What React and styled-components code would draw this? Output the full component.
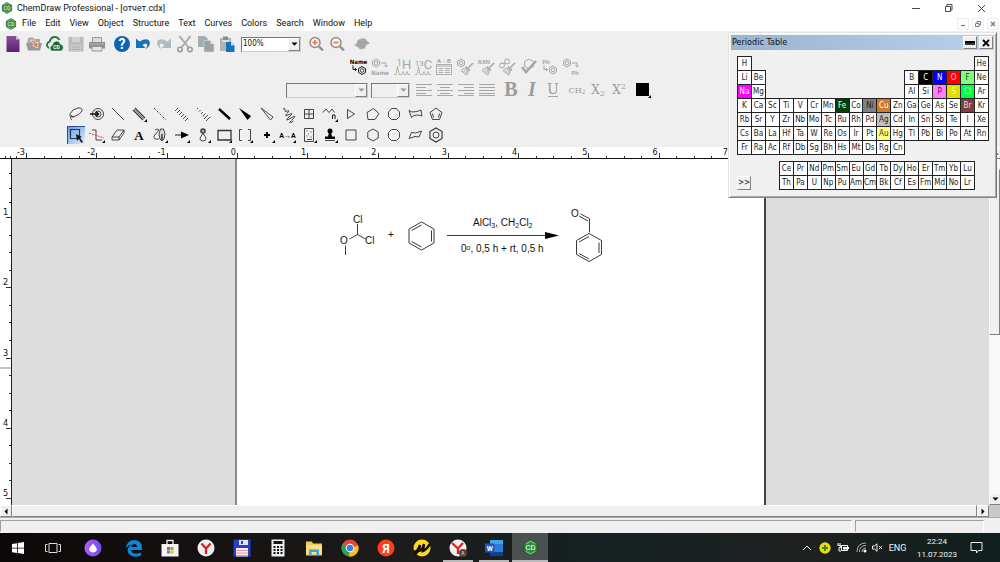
import React, { useState } from 'react';
import styled, { createGlobalStyle, css } from 'styled-components';

const GlobalStyle = createGlobalStyle`
  * {
    box-sizing: border-box;
  }

  body {
    margin: 0;
    background: #fff;
    font-family: Roboto, 'Open Sans', sans-serif;
    font-size: 9px;
    color: #111;
  }

  button {
    margin: 0;
    padding: 0;
    border: 0;
    background: none;
    font: inherit;
    color: inherit;
  }
`;

const tahoma = "'DejaVu Sans Condensed', 'DejaVu Sans', sans-serif";

const raised = css`
  background: #f0f0f0;
  border: 1px solid;
  border-color: #fdfdfd #808080 #808080 #fdfdfd;
`;

const AppWindow = styled.div`
  display: flex;
  flex-direction: column;
  height: 100vh;
  overflow: hidden;
  position: relative;
`;

// TITLE AND MENU
const TitleBar = styled.header`
  display: flex;
  align-items: center;
  flex: none;
  height: 16px;
  padding: 0 2px 0 1px;
`;

const Title = styled.h1`
  flex: 1;
  margin: 0 0 0 4px;
  font-size: 9px;
  line-height: 16px;
  font-weight: normal;
`;

const WindowButton = styled.button`
  display: flex;
  align-items: center;
  justify-content: center;
  width: 33px;
  height: 16px;
`;

const MenuBar = styled.nav`
  display: flex;
  align-items: center;
  flex: none;
  height: 15px;
  padding: 0 1px 0 5px;
`;

const MenuItem = styled.button`
  padding: 0 4px 0 5px;
  line-height: 15px;
`;

const MdiButtons = styled.div`
  display: flex;
  gap: 3px;
  margin-left: auto;
`;

const MdiButton = styled.button`
  display: flex;
  align-items: center;
  justify-content: center;
  width: 12px;
  height: 12px;
  border: 1px solid #eee;
`;

// TOOLBARS
const Toolbars = styled.div`
  flex: none;
  padding-bottom: 2px;
  background: #efefef;
`;

const ToolRow = styled.div`
  display: flex;
  align-items: center;
  height: ${(props) => props.$height}px;
  padding-left: ${(props) => props.$left}px;
  gap: ${(props) => props.$gap || 3}px;
`;

const ToolGroup = styled.div`
  display: flex;
`;

const ToolButton = styled.button`
  display: flex;
  align-items: center;
  justify-content: center;
  width: 21px;
  height: 20px;
`;

const Palette = styled.div`
  display: grid;
  grid-template-columns: repeat(18, 1fr);
  grid-auto-rows: 21px;
  width: 382px;
  margin-left: 65px;
  justify-items: center;
  align-items: center;
`;

const PaletteButton = styled.button`
  display: flex;
  align-items: center;
  justify-content: center;
  width: 18px;
  height: 18px;

  ${(props) =>
    props.$active &&
    css`
      background: linear-gradient(135deg, #5f97d8, #e4f0fb);
      box-shadow: inset 1px 1px 0 #2b4a9c;
    `}
`;

const SelectBox = styled.div`
  display: flex;
  width: ${(props) => props.$width}px;
  height: 15px;
  border: 1px solid;
  border-color: #777 #ccc #ccc #777;
  background: ${(props) => (props.$disabled ? '#efefef' : '#fff')};

  select {
    appearance: none;
    flex: 1;
    min-width: 0;
    padding: 0 1px;
    border: 0;
    border-radius: 0;
    background: none;
    font-family: ${tahoma};
    font-size: 8px;
    line-height: 12px;
    color: #111;
  }
`;

const SelectArrow = styled.span`
  ${raised}
  display: flex;
  align-items: center;
  justify-content: center;
  width: 12px;
  pointer-events: none;
`;

// DOCUMENT
const Workspace = styled.main`
  display: flex;
  flex: 1;
  min-height: 0;
`;

const DocumentColumn = styled.div`
  display: flex;
  flex-direction: column;
  flex: 1;
  min-width: 0;
`;

const HorizontalRuler = styled.div`
  display: grid;
  grid-template-columns: 27px 703px;
  flex: none;
  height: 12px;
  overflow: hidden;
  border-bottom: 1px solid #111;
  font-family: ${tahoma};
  font-size: 9px;
  line-height: 10px;
`;

const RulerRun = styled.div`
  display: grid;
  grid-template-columns: repeat(${(props) => props.$count}, 1fr);
`;

const RulerInch = styled.div`
  display: grid;
  grid-template-columns: repeat(4, 1fr);
  align-items: end;
  text-align: right;

  span {
    height: 2px;
    border-right: 1px solid #333;
  }

  span:last-child {
    height: 11px;
    padding-right: 1px;
    display: flex;
    justify-content: flex-end;
    border-image: linear-gradient(transparent 6px, #333 6px) 1;
  }
`;

const VerticalRuler = styled.div`
  flex: none;
  display: grid;
  grid-template-rows: 59px 281px;
  position: relative;
  width: 12px;
  overflow: hidden;
  border-right: 1px solid #222;
  background: #fff;
  font-family: ${tahoma};
  font-size: 9px;
  line-height: 10px;
`;

const PointerMark = styled.div`
  position: absolute;
  top: 208px;
  left: 0;
  right: 0;
  height: 2px;
  background: #c4c4c4;
`;

const VerticalRun = styled.div`
  display: grid;
  grid-template-rows: repeat(${(props) => props.$count}, 1fr);
`;

const VerticalInch = styled.div`
  display: grid;
  grid-template-rows: repeat(4, 1fr);
  justify-items: end;

  span {
    width: 2px;
    border-bottom: 1px solid #333;
  }

  span:last-child {
    width: 9px;
    display: flex;
    align-items: flex-end;
    padding-left: 1px;
    border-image: linear-gradient(to right, transparent 4px, #333 4px) 1;
  }
`;

const CanvasRow = styled.div`
  display: flex;
  flex: 1;
  min-height: 0;
`;

const Canvas = styled.div`
  display: flex;
  flex: 1;
  min-width: 0;
  padding-left: 223px;
  background: #ddd;
`;

const Page = styled.div`
  flex: none;
  width: 531px;
  padding: 41px 0 0 93px;
  background: #fff;
  border-left: 2px solid #8a8a8a;
  border-right: 2px solid #444;

  svg {
    display: block;
  }
`;

const VerticalScroll = styled.div`
  display: flex;
  flex-direction: column;
  flex: none;
  width: 11px;
  background: #f8f8f8;
`;

const ScrollButton = styled.button`
  ${raised}
  display: flex;
  align-items: center;
  justify-content: center;
  flex: none;
  width: 12px;
  height: 12px;
`;

const ScrollThumb = styled.div`
  ${raised}
  height: ${(props) => props.$height || 12}px;
  flex: ${(props) => (props.$height ? 'none' : 1)};
  margin: ${(props) => (props.$height ? '10px 0 auto' : '0')};
`;

const ScrollCorner = styled.div`
  height: 12px;
  background: #c8c8c8;
`;

const HorizontalScroll = styled.div`
  display: flex;
  flex: none;
  height: 12px;
`;

const StatusBar = styled.footer`
  display: flex;
  gap: 3px;
  flex: none;
  height: 16px;
  padding: 2px 16px 1px 0;
  background: #efefef;
  border-top: 1px solid #aaa;
`;

const StatusCell = styled.div`
  flex: ${(props) => (props.$width ? 'none' : 1)};
  width: ${(props) => props.$width}px;
  border: 1px solid;
  border-color: #a0a0a0 #fff #efefef #a0a0a0;
`;

// PERIODIC TABLE
const FloatingPanel = styled.section`
  position: absolute;
  top: 32px;
  right: 3px;
  width: 269px;
  padding: 2px 2px 7px;
  background: #f0f0f0;
  border: 1px solid;
  border-color: #e3e3e3 #777 #888 #e3e3e3;
  box-shadow: inset 1px 1px 0 #fff, inset -1px -1px 0 #aaa;
  font-family: ${tahoma};
`;

const PanelTitle = styled.div`
  display: flex;
  align-items: center;
  gap: 2px;
  height: 15px;
  padding: 0 1px;
  background: linear-gradient(to right, #99b4d1, #b9d1ea);

  h2 {
    flex: 1;
    margin: 0;
    font-size: 9px;
    line-height: 15px;
    font-weight: normal;
  }
`;

const PanelButton = styled.button`
  ${raised}
  display: flex;
  align-items: center;
  justify-content: center;
  width: 14px;
  height: 13px;
`;

const ElementTable = styled.table`
  width: ${(props) => props.$width}px;
  margin-left: 6px;
  margin-top: 6px;
  table-layout: fixed;
  border-collapse: collapse;

  td {
    height: 14px;
    padding: 0;
    font-size: 8px;
    line-height: 12px;
    text-align: center;
  }
`;

const Element = styled.td`
  border: 1px solid #222;
  background: ${(props) => props.$bg || '#fff'};
  color: ${(props) => props.$color || '#222'};
`;

const PanelFooter = styled.div`
  display: flex;
  align-items: flex-end;
  padding-left: 6px;

  table {
    margin-left: 28px;
  }
`;

const MoreButton = styled.button`
  ${raised}
  width: 14px;
  height: 14px;
  font-size: 8px;
  line-height: 12px;
`;

// TASKBAR
const Taskbar = styled.div`
  display: flex;
  flex: none;
  height: 29px;
  background: linear-gradient(to right, #0c0807, #1d1c1b 40%, #152122 60%, #1f2020 80%, #0f1f1d);
  color: #f2f2f2;
`;

const TaskButton = styled.button`
  display: flex;
  align-items: center;
  justify-content: center;
  width: ${(props) => props.$width || 36}px;
  background: ${(props) => (props.$active ? '#4b5050' : 'none')};
  ${(props) =>
    props.$running &&
    css`
      background-image: linear-gradient(#b9b9b9, #b9b9b9);
      background-repeat: no-repeat;
      background-position: bottom;
      background-size: ${props.$active ? '36px' : '30px'} 2px;
    `}
`;

const Tray = styled.div`
  display: flex;
  align-items: center;
  margin-left: auto;
  padding-right: 3px;
`;

const TrayButton = styled.button`
  display: flex;
  align-items: center;
  justify-content: center;
  width: ${(props) => props.$width || 18}px;
  height: 29px;
`;

const Clock = styled.time`
  width: 52px;
  text-align: center;
  font-size: 8px;
  line-height: 13px;
`;

const Drawing = ({ w = 18, h = 18, children }) => (
  <svg width={w} height={h} viewBox={`0 0 ${w} ${h}`} aria-hidden="true">
    {children}
  </svg>
);

const Corner = () => <path d="M17 14V17h-3z" fill="#000" />;

const ArrowDown = ({ color = '#000' }) => (
  <Drawing w={7} h={4}>
    <path d="M0.5 0.5h6L3.5 3.7z" fill={color} />
  </Drawing>
);

const CdLogo = ({ size = 14 }) => (
  <svg width={size} height={size} viewBox="0 0 18 18" aria-hidden="true">
    <path d="M9 .8l7 4.1v8.2L9 17.2l-7-4.1V4.900z" fill="#2f8b3d" stroke="#176129" />
    <path d="M4 5l5-2.800L14 5M14 13l-5 2.800L4 13" fill="none" stroke="#b9dfb8" strokeWidth=".8" />
    <text x="9" y="12" fontSize="8" fontFamily="Roboto" textAnchor="middle" fill="#fff">CD</text>
  </svg>
);

const g = '#a6a6a6';
const line = { fill: 'none', stroke: '#333', strokeWidth: 0.9 };
const grey = { fill: 'none', stroke: g, strokeWidth: 1 };

const Broom = () => (
  <g>
    <path d="M17 5l-4.500 4.500" stroke={g} strokeWidth="1.600" />
    <path d="M10.500 8l4 4-1.500 1.200-3.800-3.800z" fill={g} />
    <path d="M8.500 10l3.800 3.800-1.800 3.200-5.500-4.500z" fill="none" stroke={g} />
    <path d="M9.500 11.500l-2 2.500M11 13l-1.500 2.500" stroke={g} />
  </g>
);

const Magnifier = ({ plus }) => (
  <Drawing>
    <circle cx="8" cy="7.500" r="5" fill="#f6f0ee" stroke="#8f8f8f" strokeWidth="1.500" />
    <path d="M12 11.500l4 4" stroke="#8f8f8f" strokeWidth="2.400" />
    <path d={plus ? 'M5.500 7.500h5M8 5v5' : 'M5.500 7.500h5'} stroke="#f0743a" strokeWidth="1.600" />
  </Drawing>
);

const fileTools = [
  ['New', <Drawing>
    <defs><linearGradient id="doc" x2="0" y2="1"><stop stopColor="#8c4f9c" /><stop offset="1" stopColor="#55246f" /></linearGradient></defs>
    <path d="M2.500 1h9.500l3.500 3.500V17h-13z" fill="url(#doc)" /><path d="M12 1l3.500 3.500H12z" fill="#d8c2e0" />
  </Drawing>],
  ['Open', <Drawing>
    <path d="M2.500 4.500L4 2.500h4l1.500 1.500H15v4H2.500z" fill="#a9a9a9" /><path d="M1 8h16l-2 7.500H3z" fill="#999" />
    <path d="M5 5.500q4.500-1.500 6 2.500l2-1-.5 6-5-2.500 1.700-1Q8 6.500 5 5.500z" fill="#f07a35" stroke="#fff" strokeWidth=".6" />
  </Drawing>],
  ['Open from cloud', <Drawing>
    <path d="M3 13q-2.500-1-1.800-4 .5-2 2.500-2.500Q5 1.500 9.500 2q3 .5 4 3" fill="none" stroke="#2a7a40" strokeWidth="2" />
    <path d="M6 16q-2.500-1-1.800-3.500.5-1.800 2-2.300Q7 6.500 10.500 6q3 0 4 3.300 2.800.5 2.800 3.200 0 3-2.500 3.500z" fill="#1c6b35" stroke="#efefef" strokeWidth=".6" />
    <text x="10.500" y="14" fontSize="5" fontWeight="bold" textAnchor="middle" fill="#fff">CD</text>
  </Drawing>],
  ['Save', <Drawing>
    <path d="M1.500 2h15v14.500h-15z" fill="#bbb" /><path d="M5 2h8v5H5z" fill="#d2d2d2" /><path d="M4 9.500h10v7H4z" fill="#c9c9c9" />
    <path d="M5 12h8M5 14.500h8" stroke="#b2b2b2" />
  </Drawing>],
  ['Print', <Drawing>
    <path d="M4.500 2.500h9v5h-9z" fill="#ddd" stroke="#999" /><path d="M1 7h16v6.500H1z" fill="#8e8e8e" />
    <path d="M4 11.500h10v4.500H4z" fill="#e4e4e4" stroke="#999" /><path d="M2 9h14" stroke="#bbb" />
  </Drawing>],
];

const editTools = [
  ['Help', <Drawing>
    <circle cx="9" cy="9" r="8" fill="#0a66ad" />
    <text x="9" y="14" fontSize="14" fontWeight="bold" textAnchor="middle" fill="#fff">?</text>
  </Drawing>],
  ['Undo', <Drawing>
    <path d="M2 3.500V13h9.500l-3-3q3-2.500 4.500-1 1 2.500-2 5.500 6-3 4.500-8.500Q13 2.500 5.500 6.500z" fill="#1572b5" />
  </Drawing>],
  ['Redo', <Drawing>
    <path d="M16 3.500V13H6.500l3-3Q6.500 7.500 5 9q-1 2.500 2 5.500Q1 11.500 2.500 6 5 2.500 12.500 6.500z" fill="#b0bac1" />
  </Drawing>],
  ['Cut', <Drawing>
    <path d="M3.500 1l9 11.500M14.500 1L5.500 12.500" stroke="#a6a6a6" strokeWidth="1.800" />
    <circle cx="4" cy="14.500" r="2.200" fill="none" stroke="#9b9b9b" strokeWidth="1.600" /><circle cx="14" cy="14.500" r="2.200" fill="none" stroke="#9b9b9b" strokeWidth="1.600" />
  </Drawing>],
  ['Copy', <Drawing>
    <path d="M1 1h7l2.500 2.500V12H1z" fill="#a4adb2" /><path d="M7 5.500h6.500L17 9v8H7z" fill="#97a2a9" stroke="#dcdcdc" strokeWidth=".6" />
    <path d="M13.500 5.500V9H17z" fill="#dfe4e6" />
  </Drawing>],
  ['Paste', <Drawing>
    <path d="M2 3h11v13H2z" fill="#b4b4b4" /><path d="M5 1.500h5V5H5z" fill="#8c8c8c" /><path d="M4 5h7v2H4z" fill="#dedede" />
    <path d="M8 7h5l3.500 3.500V17H8z" fill="#1274bb" /><path d="M13 7v3.500h3.500z" fill="#bfe0f5" />
  </Drawing>],
];

const hexSmall = (x, y, r = 4) => `M${x} ${y - r}l${r * 0.87} ${r / 2}v${r}l${-r * 0.87} ${r / 2}l${-r * 0.87} ${-r / 2}v${-r}z`;

const structureTools = [
  [
    ['Name to structure', <Drawing>
      <text x="8.500" y="5.500" fontSize="6" fontWeight="bold" fontFamily="DejaVu Sans Condensed" textAnchor="middle" fill="#000">Name</text>
      <path d="M3 7.500v4h3M5 10l1.600 1.500L5 13" {...line} stroke="#000" /><path d={hexSmall(12, 12.500)} {...line} stroke="#000" /><circle cx="12" cy="12.500" r="1.800" {...line} />
    </Drawing>],
    ['Structure to name', <Drawing>
      <path d={hexSmall(5, 5)} {...grey} /><circle cx="5" cy="5" r="1.800" {...grey} />
      <path d="M10 5h5v4M13.500 7.500L15 9l1.500-1.500" {...grey} />
      <text x="9" y="16.500" fontSize="6" fontWeight="bold" fontFamily="DejaVu Sans Condensed" textAnchor="middle" fill={g}>Name</text>
    </Drawing>],
  ],
  [
    ['Proton shifts', <Drawing>
      <text x="11" y="11" fontSize="13" textAnchor="middle" fill={g}><tspan fontSize="9" dy="-3">1</tspan><tspan dy="3">H</tspan></text>
      <path d="M1 16.500h2l1.500-8 1.500 8h3l1-3 1 3h2l1-3 1 3h2" {...grey} strokeWidth=".8" />
    </Drawing>],
    ['Carbon shifts', <Drawing>
      <text x="9.500" y="11" fontSize="13" textAnchor="middle" fill={g}><tspan fontSize="8" dy="-3">13</tspan><tspan dy="3">C</tspan></text>
      <path d="M1 16.500h2l1.500-8 1.500 8h3l1-3 1 3h2l1-3 1 3h2" {...grey} strokeWidth=".8" />
    </Drawing>],
    ['Analyze reaction', <Drawing>
      <text x="9" y="5" fontSize="6" fontWeight="bold" textAnchor="middle" fill={g}>A→B</text>
      <path d="M1.500 6.500h15v10h-15zM1.500 8h15M3.500 10.500h5M10 10.500h5M3.500 12.500h5M10 12.500h5M3.500 14.500h5M10 14.500h5" {...grey} strokeWidth=".9" />
    </Drawing>],
    ['Clean structure', <Drawing><path d={hexSmall(5, 5)} {...grey} /><circle cx="5" cy="5" r="1.800" {...grey} /><Broom /></Drawing>],
    ['Clean reaction', <Drawing><text x="7" y="5.500" fontSize="6" fontWeight="bold" textAnchor="middle" fill={g}>RXN</text><Broom /></Drawing>],
    ['Clean biopolymer', <Drawing>
      <circle cx="4" cy="7.500" r="2.500" {...grey} /><circle cx="9" cy="3.500" r="2.500" {...grey} /><path d="M4 5q2 1 3 0" {...grey} /><Broom />
    </Drawing>],
  ],
  [
    ['Check structure', <Drawing>
      <path d={hexSmall(9, 6, 5)} {...grey} /><path d="M2 9l4 5L16 3" fill="none" stroke={g} strokeWidth="2.500" />
    </Drawing>],
    ['Expand label', <Drawing>
      <text x="5" y="5.500" fontSize="6" fontWeight="bold" textAnchor="middle" fill={g}>Ph</text>
      <path d="M3 7.500v4h3M5 10l1.600 1.500L5 13" {...grey} /><path d={hexSmall(12, 12, 4)} {...grey} /><circle cx="12" cy="12" r="1.800" {...grey} />
    </Drawing>],
    ['Contract label', <Drawing>
      <path d={hexSmall(5, 5)} {...grey} /><circle cx="5" cy="5" r="1.800" {...grey} /><path d="M10 5h5v4M13.500 7.500L15 9l1.500-1.500" {...grey} />
      <text x="13" y="16.500" fontSize="6" fontWeight="bold" textAnchor="middle" fill={g}>Ph</text>
    </Drawing>],
  ],
];

const alignRows = [
  ['Align left', 'M1 3.500h16M1 6.500h10M1 9.500h16M1 12.500h10M1 14.500h16'],
  ['Center', 'M1 3.500h16M4 6.500h10M1 9.500h16M4 12.500h10M1 14.500h16'],
  ['Align right', 'M1 3.500h16M7 6.500h10M1 9.500h16M7 12.500h10M1 14.500h16'],
  ['Justify', 'M1 3.500h16M1 6.500h16M1 9.500h16M1 12.500h16M1 14.500h16'],
];

const Serif = ({ size, children, ...rest }) => (
  <text x="10" y="15" fontSize={size} fontFamily="DejaVu Serif" textAnchor="middle" fill="#9c9c9c" {...rest}>
    {children}
  </text>
);

const styleTools = [
  ['Bold', <Serif size="20" fontFamily="Liberation Serif" fontWeight="bold">B</Serif>],
  ['Italic', <Serif size="20" fontFamily="Liberation Serif" fontWeight="bold" fontStyle="italic">I</Serif>],
  ['Underline', <><Serif size="14" y="13">U</Serif><path d="M5 15.500h10" {...grey} /></>],
];

const scriptTools = [
  ['Formula', <Serif size="8" y="12">CH<tspan fontSize="6" dy="1">2</tspan></Serif>],
  ['Subscript', <Serif size="12" y="13">X<tspan fontSize="8" dy="2">2</tspan></Serif>],
  ['Superscript', <Serif size="12" y="13">X<tspan fontSize="8" dy="-5">2</tspan></Serif>],
];

const drawingTools = [
  ['Lasso', <><path d="M7 12Q2 12 3 9q2-5 8-6 5-.5 4 3-2 4-8 5.500Q4 12 4 10M4 11.500q-1.500 2 1 3.500" {...line} /></>],
  ['Structure perspective', <><circle cx="10" cy="9" r="5.500" {...line} /><circle cx="10" cy="9" r="3" {...line} /><path d="M2 9h8M8 6.500L10.500 9 8 11.500" {...line} stroke="#111" strokeWidth="1.500" /></>],
  ['Solid bond', <path d="M3 3l12 12" {...line} />],
  ['Multiple bonds', <><path d="M3 5l10 10M5 3l10 10" {...line} strokeWidth="1.100" /><path d="M4 4l10 10" {...line} strokeWidth=".6" /><Corner /></>],
  ['Dashed bond', <path d="M3 3l12 12" {...line} strokeDasharray="2.500 1.500" />],
  ['Hashed bond', <path d="M2 6l3-3M4 8l3-3M6 10l3-3M8 12l3-3M10 14l3-3M12 16l3-3" {...line} />],
  ['Hashed wedged bond', <path d="M3 4l1-1M5 6.500l1.500-1.500M7 9l2-2M8.500 11.500l3-3M10 14l4-4M12 16l4-4" {...line} />],
  ['Bold bond', <path d="M4 4l11 10" {...line} stroke="#000" strokeWidth="2.400" />],
  ['Wedged bond', <path d="M3 3l12 8-3.500 4z" fill="#000" />],
  ['Hollow wedged bond', <path d="M3 3l12 9-2.500 3z" {...line} />],
  ['Wavy bond', <path d="M4 4q2.500-1.500 2 1t2.500 1-.5 2.500 2 1 0 2.500 2 1 .500 2.500 2 .5" {...line} />],
  ['Table', <path d="M4.500 4.500h9v9h-9zM9 4.500v9M4.500 9h9" {...line} />],
  ['Acyclic chain', <><path d="M2 7.500l3-3.500 3 3.500L11 4l2.500 3.500" {...line} /><path d="M11.500 14v-4h2.500v4" {...line} stroke="#000" /><Corner /></>],
  ['Cyclopropane', <path d="M5.500 4.500l7 4.500-7 4.500z" {...line} />],
  ['Cyclopentane', <path d="M9.500 3.500l5.500 5L11 14.500H4l-1-7z" {...line} />],
  ['Cycloheptane', <path d="M6.500 3.500h5L14.500 7v4.500L11.500 14.500h-5L3.500 11.500V7z" {...line} />],
  ['Chair cyclohexane', <path d="M3 5.500l3 1.500 5-.5 4-1.500 1 6-4-1-4 .5-2.500 2z" {...line} />],
  ['Cyclopentadiene', <path d="M9 3l6 4.500-2.500 7h-7L3 7.500zM6.500 12.500L5.500 8.500M11.500 12.500l1-4" {...line} />],
  ['Marquee', <><path d="M3.500 3.500h9v9h-9z" {...line} stroke="#173a5e" strokeWidth="1.200" /><path d="M9 8l6 3-2 1 3 4-1.500 1-2.500-4-2 2z" fill="#111" /></>],
  ['Structure fragment', <><path d="M4 4h4v10h6" {...line} /><path d="M1 7l15 5" fill="none" stroke="#f33" strokeDasharray="2 1" /><Corner /></>],
  ['Eraser', <path d="M3 11l5-7h7l-5 7zM3 11v3h7v-3M10 14l5-7V4" {...line} />],
  ['Text', <text x="9" y="13.500" fontSize="13" fontFamily="Liberation Serif" fontWeight="bold" textAnchor="middle">A</text>],
  ['Pen', <><path d="M8 13Q2 14 3 10l5-6M4 4q2-2 4 0" {...line} /><path d="M9.500 3h3l1.500 5-1 5-2 2-2-2-1-5z" {...line} fill="#ddd" /><path d="M11 8v6" {...line} strokeWidth="1.500" /><Corner /></>],
  ['Arrow', <><path d="M2 9h9" {...line} stroke="#000" /><path d="M8 5.500L16 9l-8 3.500z" fill="#000" /><Corner /></>],
  ['Orbital', <><circle cx="9" cy="5" r="2.800" fill="#444" /><circle cx="9" cy="5" r="1" fill="#ddd" /><path d="M9 7.500q-6 7 0 7.500 6-.5 0-7.500z" {...line} /><Corner /></>],
  ['Drawing elements', <><path d="M3 4.500h13v9.500H3z" {...line} strokeWidth="1.300" /><Corner /></>],
  ['Brackets', <><path d="M6 3.500H3.500v11H6M12 3.500h2.500v11H12" {...line} /><Corner /></>],
  ['Chemical symbol', <><path d="M9 6v6M6 9h6" stroke="#000" strokeWidth="1.800" /><Corner /></>],
  ['Atom map', <><text x="8.500" y="12" fontSize="7" fontWeight="bold" textAnchor="middle">A→A</text><Corner /></>],
  ['TLC plate', <><path d="M4.500 2.500h9v13h-9z" {...line} /><path d="M6.500 5h1M10.500 6h1M8 8h1M6.500 10h1M10.500 11h1M7 13.500h5" {...line} /><Corner /></>],
  ['Template', <><circle cx="9" cy="5" r="2.500" /><path d="M8 6h2l1 4.500h3V13H4v-2.500h3z" /><path d="M4 14.500h10" {...line} /><Corner /></>],
  ['Cyclobutane', <path d="M4 4h10v10H4z" {...line} />],
  ['Cyclohexane', <path d={hexSmall(9, 9, 6)} {...line} />],
  ['Cyclooctane', <path d="M6.500 3.500h5L14.500 6.500v5L11.500 14.500h-5L3.500 11.500v-5z" {...line} />],
  ['Chair cyclohexane 2', <path d="M3 12.500l2.500-6 4 .5 6-2-2.500 6-4-.5z" {...line} />],
  ['Benzene', <><path d={hexSmall(9, 9, 7)} {...line} strokeWidth="1.100" /><circle cx="9" cy="9" r="3" {...line} /></>],
];

const elementColors = {
  Na: ['#ff00ff', '#fff'], C: ['#000', '#fff'], N: ['#0000ff', '#fff'], O: ['#ff0000', '#ffd0d0'],
  F: ['#80ff80', '#174d17'], P: ['#ff80ff', '#4d174d'], S: ['#e0e000', '#fffbb0'], Cl: ['#00ff40', '#d8ffe0'],
  Fe: ['#004000', '#fff'], Ni: ['#808080', '#222'], Cu: ['#d07a30', '#fff'], Br: ['#803f3f', '#ecd8d8'],
  Ag: ['#c0c0c0', '#222'], Au: ['#ffff80', '#333'],
};

const mainElements = [
  'H ---------------- He',
  'Li Be ---------- B C N O F Ne',
  'Na Mg ---------- Al Si P S Cl Ar',
  'K Ca Sc Ti V Cr Mn Fe Co Ni Cu Zn Ga Ge As Se Br Kr',
  'Rb Sr Y Zr Nb Mo Tc Ru Rh Pd Ag Cd In Sn Sb Te I Xe',
  'Cs Ba La Hf Ta W Re Os Ir Pt Au Hg Tl Pb Bi Po At Rn',
  'Fr Ra Ac Rf Db Sg Bh Hs Mt Ds Rg Cn ------',
];

const innerElements = [
  'Ce Pr Nd Pm Sm Eu Gd Tb Dy Ho Er Tm Yb Lu',
  'Th Pa U Np Pu Am Cm Bk Cf Es Fm Md No Lr',
];

const Elements = ({ rows, width, count }) => (
  <ElementTable $width={width}>
    <colgroup>
      {Array.from({ length: count }, (_, i) => <col key={i} />)}
    </colgroup>
    <tbody>
      {rows.map((row) => (
        <tr key={row}>
          {row.split(' ').map((symbol) =>
            symbol[0] === '-' ? (
              <td key={symbol} colSpan={symbol.length} />
            ) : (
              <Element key={symbol} $bg={elementColors[symbol]?.[0]} $color={elementColors[symbol]?.[1]}>
                {symbol}
              </Element>
            )
          )}
        </tr>
      ))}
    </tbody>
  </ElementTable>
);

const Inch = ({ as: Part, label }) => (
  <Part>
    <span />
    <span />
    <span />
    <span>{label}</span>
  </Part>
);

const Reaction = () => (
  <svg width="290" height="70" viewBox="0 0 290 70" fontFamily="Liberation Sans" fontSize="10" role="img" aria-label="Reaction scheme">
    <g fill="none" stroke="#222" strokeWidth=".9">
      <path d="M27.500 24v10.500l-8 4.500M27.500 34.500l8 4.500M15.500 45.500v9.500" />
      <path d="M91.500 22l12.500 7v14l-12.500 7-12.500-7V29zM91.500 25l-10 5.500M101.500 30.500v11M91.500 47l-10-5.500" />
      <path d="M117 35.500h100" />
      <path d="M249 16l9 5M250.500 13.800l9 5v13.500M259 33.500l12.500 7v14l-12.500 7-12.500-7v-14zM259 36.500l-10 5.500M249 53.500l10 5.500M269 42.500v10.500" />
    </g>
    <path d="M215 32l14 3.500-14 3.500z" />
    <g fill="#111">
      <text x="23" y="23">Cl</text>
      <text x="35" y="44">Cl</text>
      <text x="10" y="44">O</text>
      <text x="58" y="38">+</text>
      <text x="143" y="26">AlCl<tspan fontSize="7" dy="2">3</tspan><tspan dy="-2">, CH</tspan><tspan fontSize="7" dy="2">2</tspan><tspan dy="-2">Cl</tspan><tspan fontSize="7" dy="2">2</tspan></text>
      <text x="131" y="52">0<tspan fontSize="7" dy="-2">o</tspan><tspan dy="2">, 0,5 h + rt, 0,5 h</tspan></text>
      <text x="241" y="17">O</text>
    </g>
  </svg>
);

const taskIcons = [
  ['Edge', <><path d="M1 9Q2 1 9.500 1q7.500.5 7.500 8v2H6q.500 3.500 5 3.500 3 0 5-1v3q-3 1.500-6 1.300Q3 17 2.500 11 3 7 7 5.500 4 5 1 9zM6 8h6q0-3-3-3-2.500.3-3 3z" fill="#0a84dc" /></>],
  ['Store', <><path d="M6 5V1.500h6V5" fill="none" stroke="#eee" strokeWidth="1.300" /><path d="M.5 5h17v12.500H.5z" fill="#f4f4f4" /><path d="M6 8h3v3H6z" fill="#e8502c" /><path d="M9.500 8h3v3h-3z" fill="#7cb82f" /><path d="M6 11.500h3v3H6z" fill="#2a9bdc" /><path d="M9.500 11.500h3v3h-3z" fill="#f5b81c" /></>],
  ['Yandex Browser', <><circle cx="9" cy="9" r="8.500" fill="#eee" /><path d="M4.500 4.500L9 9.500l4.500-5M9 9v6" fill="none" stroke="#d8201c" strokeWidth="2.200" /></>],
  ['Total Commander', <><path d="M.5.5h17v17H.5z" fill="#2440c8" /><path d="M3 9h12v8.500H3z" fill="#fbeaea" /><path d="M3 11.500h12M3 14h12M3 16.500h12" stroke="#ef9a9a" /><path d="M6 1h9v5H6z" fill="#dfe5f5" /><path d="M8 2h2v3H8z" fill="#2440c8" /></>],
  ['Calculator', <><path d="M2.500.5h13v17h-13z" fill="#eee" /><path d="M4.500 2h9v3h-9z" fill="#161616" /><path d="M4.500 8h9M4.500 11h9M4.500 14h9" stroke="#161616" strokeWidth="2" strokeDasharray="2 1.500" /></>],
  ['Explorer', <><path d="M1 2.500h6l1 2h9v12H1z" fill="#f5c851" /><path d="M1 6h16v9H1z" fill="#fbdf87" /><path d="M4 16.500v-6h10v6h-2.500V13h-5v3.500z" fill="#33a7e0" /></>],
  ['Chrome', <><circle cx="9" cy="9" r="8.500" fill="#e8453c" /><path d="M9 9L1.600 4.700A8.500 8.500 0 0 0 8 17.400z" fill="#2f9e4f" /><path d="M9 9l8.200-2.500A8.500 8.500 0 0 1 8 17.400z" fill="#fbc116" /><circle cx="9" cy="9" r="4.300" fill="#fff" /><circle cx="9" cy="9" r="3.300" fill="#3b7de9" /></>],
  ['Yandex', <><circle cx="9" cy="9" r="8.500" fill="#fc3f1d" /><text x="9" y="13.500" fontSize="12" fontWeight="bold" textAnchor="middle" fill="#fff">Я</text></>],
  ['Yandex Music', <><circle cx="9" cy="9" r="8.500" fill="#ffd91a" /><path d="M1 12q3 2 6-6l-1 6q3 0 5-7l-1 7q3-1 7-7M2 15q2-1 3-3" fill="none" stroke="#111" strokeWidth="2.400" /></>],
  ['Yandex Browser A', <><circle cx="9" cy="9" r="8.500" fill="#f1f1f1" /><path d="M3 4l6 5.500L14 4M9 9v6" fill="none" stroke="#d8201c" strokeWidth="2.200" /><circle cx="14" cy="14" r="4" fill="#5b4038" /><text x="14" y="16" fontSize="5" textAnchor="middle" fill="#ddd">A</text></>, true],
  ['Word', <><path d="M5 1h13v16H5z" fill="#2b7cd3" /><path d="M5 1h13v4H5z" fill="#41a5ee" /><path d="M5 13h13v4H5z" fill="#103f91" /><path d="M0 4.500h9.500v9H0z" fill="#185abd" /><text x="4.800" y="11.500" fontSize="7" fontWeight="bold" textAnchor="middle" fill="#fff">W</text></>, true],
];

const Tools = ({ items, disabled }) => (
  <ToolGroup>
    {items.map(([name, icon]) => (
      <ToolButton key={name} aria-label={name} disabled={disabled}>
        {icon}
      </ToolButton>
    ))}
  </ToolGroup>
);

const App = () => {
  const [zoom, setZoom] = useState('100%');
  const [tool, setTool] = useState('Marquee');

  return (
    <AppWindow>
      <GlobalStyle />
      <TitleBar>
        <CdLogo size={12} />
        <Title>ChemDraw Professional - [отчет.cdx]</Title>
        <WindowButton aria-label="Minimize"><Drawing w={9} h={9}><path d="M1 4.500h8" {...line} /></Drawing></WindowButton>
        <WindowButton aria-label="Restore"><Drawing w={9} h={9}><path d="M1.500 2.500h5v5h-5zM3 2V.5h5v5.500H7" {...line} /></Drawing></WindowButton>
        <WindowButton aria-label="Close"><Drawing w={9} h={9}><path d="M1 1l7 7M8 1L1 8" {...line} /></Drawing></WindowButton>
      </TitleBar>
      <MenuBar>
        <CdLogo size={12} />
        {['File', 'Edit', 'View', 'Object', 'Structure', 'Text', 'Curves', 'Colors', 'Search', 'Window', 'Help'].map((item) => (
          <MenuItem key={item}>{item}</MenuItem>
        ))}
        <MdiButtons>
          <MdiButton aria-label="Minimize document"><Drawing w={6} h={6}><path d="M1 4.500h4" stroke="#6f7f90" strokeWidth="1.200" /></Drawing></MdiButton>
          <MdiButton aria-label="Restore document"><Drawing w={6} h={6}><path d="M.5 2.500h3.500v3H.5zM2 2V.5h3.500V4H4" fill="none" stroke="#6f7f90" /></Drawing></MdiButton>
          <MdiButton aria-label="Close document"><Drawing w={6} h={6}><path d="M1 1l4 4M5 1L1 5" stroke="#6f7f90" strokeWidth="1.400" /></Drawing></MdiButton>
        </MdiButtons>
      </MenuBar>

      <Toolbars>
        <ToolRow $height={26} $left={2} $gap={4}>
          <Tools items={fileTools} />
          <Tools items={editTools} />
          <SelectBox $width={60}>
            <select aria-label="Zoom" value={zoom} onChange={(e) => setZoom(e.target.value)}>
              <option>50%</option>
              <option>100%</option>
              <option>200%</option>
            </select>
            <SelectArrow><ArrowDown /></SelectArrow>
          </SelectBox>
          <Tools items={[['Zoom in', <Magnifier plus />], ['Zoom out', <Magnifier />]]} />
          <Tools items={[['Chem3D', <Drawing><path d="M4 6q4-4 9-2l1 2 3 2-4 2.500-1 3-5 1-2-2.500-4-2 3-2z" fill="#aaa" /><path d="M5 8l9-1M4 11l8-1" stroke="#999" /></Drawing>]]} />
        </ToolRow>
        <ToolRow $height={20} $left={348} $gap={1}>
          {structureTools.map((items, i) => <Tools key={i} items={items} />)}
        </ToolRow>
        <ToolRow $height={26} $left={286}>
          <SelectBox $width={82} $disabled>
            <select aria-label="Font" disabled />
            <SelectArrow><ArrowDown color="#999" /></SelectArrow>
          </SelectBox>
          <SelectBox $width={39} $disabled>
            <select aria-label="Font size" disabled />
            <SelectArrow><ArrowDown color="#999" /></SelectArrow>
          </SelectBox>
          <Tools disabled items={alignRows.map(([name, d]) => [name, <Drawing><path d={d} {...grey} /></Drawing>])} />
          <Tools disabled items={styleTools.map(([name, d]) => [name, <Drawing w={20}>{d}</Drawing>])} />
          <Tools disabled items={scriptTools.map(([name, d]) => [name, <Drawing w={20}>{d}</Drawing>])} />
          <Tools items={[['Color', <Drawing><path d="M2 2h13v13H2z" /><Corner /></Drawing>]]} />
        </ToolRow>
        <Palette>
          {drawingTools.map(([name, icon]) => (
            <PaletteButton key={name} aria-label={name} $active={tool === name} onClick={() => setTool(name)}>
              <Drawing>{icon}</Drawing>
            </PaletteButton>
          ))}
        </Palette>
      </Toolbars>

      <Workspace>
        <DocumentColumn>
          <HorizontalRuler>
            <RulerRun $count={1}><Inch as={RulerInch} label="-3" /></RulerRun>
            <RulerRun $count={10}>
              {[-2, -1, 0, 1, 2, 3, 4, 5, 6, 7].map((n) => <Inch key={n} as={RulerInch} label={n} />)}
            </RulerRun>
          </HorizontalRuler>
          <CanvasRow>
            <VerticalRuler>
              <VerticalRun $count={1}><Inch as={VerticalInch} label="1" /></VerticalRun>
              <VerticalRun $count={4}>
                {[2, 3, 4, 5].map((n) => <Inch key={n} as={VerticalInch} label={n} />)}
              </VerticalRun>
              <PointerMark />
            </VerticalRuler>
            <Canvas>
              <Page><Reaction /></Page>
            </Canvas>
          </CanvasRow>
          <HorizontalScroll>
            <ScrollButton aria-label="Scroll left"><Drawing w={4} h={7}><path d="M3.500.5v6L.5 3.500z" /></Drawing></ScrollButton>
            <ScrollThumb />
            <ScrollButton aria-label="Scroll right"><Drawing w={4} h={7}><path d="M.5.5v6l3-3z" /></Drawing></ScrollButton>
          </HorizontalScroll>
        </DocumentColumn>
        <VerticalScroll>
          <ScrollButton aria-label="Scroll up"><Drawing w={7} h={4}><path d="M.5 3.500h6l-3-3z" /></Drawing></ScrollButton>
          <ScrollThumb $height={166} />
          <ScrollButton aria-label="Scroll down"><ArrowDown /></ScrollButton>
          <ScrollCorner />
        </VerticalScroll>
      </Workspace>

      <StatusBar>
        <StatusCell />
        <StatusCell $width={129} />
      </StatusBar>

      <Taskbar>
        <TaskButton $width={35} aria-label="Start">
          <Drawing w={12} h={12}><path d="M0 2l5-.8v4.500H0zM5.800 1L12 0v5.700H5.800zM0 6.500h5v4.500l-5-.8zM5.800 6.500H12V12l-6.200-1z" fill="#fff" /></Drawing>
        </TaskButton>
        <TaskButton $width={35} aria-label="Task view">
          <Drawing w={16} h={12}><path d="M4 1.500h8v9H4zM2.500 2.500h-2v7h2M13.500 2.500h2v7h-2" fill="none" stroke="#ddd" /></Drawing>
        </TaskButton>
        <TaskButton $width={46} aria-label="Alice">
          <Drawing>
            <defs><linearGradient id="alice" x2="1"><stop stopColor="#b45cf5" /><stop offset="1" stopColor="#6a4df5" /></linearGradient></defs>
            <circle cx="9" cy="9" r="8.500" fill="url(#alice)" /><path d="M9 4.500q3 3 4 6-1 3-4 3t-4-3q1-3 4-6z" fill="#fff" />
          </Drawing>
        </TaskButton>
        {taskIcons.map(([name, icon, running]) => (
          <TaskButton key={name} aria-label={name} $running={running}>
            <Drawing>{icon}</Drawing>
          </TaskButton>
        ))}
        <TaskButton aria-label="ChemDraw" $active $running><CdLogo size={17} /></TaskButton>
        <Tray>
          <TrayButton aria-label="Hidden icons"><Drawing w={10} h={6}><path d="M1 5l4-4 4 4" fill="none" stroke="#fff" /></Drawing></TrayButton>
          <TrayButton aria-label="Antivirus"><Drawing w={12} h={12}><circle cx="6" cy="6" r="5.700" fill="#f2d90f" /><path d="M6 3v6M3 6h6" stroke="#2e8b2e" strokeWidth="2" /></Drawing></TrayButton>
          <TrayButton aria-label="Battery"><Drawing w={12} h={9}><path d="M4.500 2.500h6v5h-6zM11.500 4v2M1 0v2M3 0v2M.5 2.500h3v2H2V8h2" fill="none" stroke="#fff" /><path d="M6 4h4v2.500H6z" fill="#fff" /></Drawing></TrayButton>
          <TrayButton aria-label="Network"><Drawing w={11} h={11}><path d="M1 10Q1 1 10 1M3.500 10q0-6.500 6.500-6.500M6 10q0-4 4-4" fill="none" stroke="#aaa" /><circle cx="9" cy="9" r="1.500" fill="#fff" /></Drawing></TrayButton>
          <TrayButton $width={14} aria-label="Volume"><Drawing w={11} h={9}><path d="M.5 3h2L5 .8v7.500L2.500 6h-2zM7 3l3 3M10 3L7 6" fill="none" stroke="#eee" /></Drawing></TrayButton>
          <TrayButton $width={27}>ENG</TrayButton>
          <Clock>22:24<br />11.07.2023</Clock>
          <TrayButton $width={26} aria-label="Notifications"><Drawing w={13} h={13}><path d="M1 1.500h11v8H8.500L6.500 12v-2.500H1z" fill="none" stroke="#eee" /></Drawing></TrayButton>
          <TrayButton $width={8} aria-label="Show desktop" />
        </Tray>
      </Taskbar>

      <FloatingPanel>
        <PanelTitle>
          <h2>Periodic Table</h2>
          <PanelButton aria-label="Collapse"><Drawing w={10} h={4}><path d="M0 0h10v4H0z" fill="#333" /><path d="M0 0h10v2H0z" /></Drawing></PanelButton>
          <PanelButton aria-label="Close panel"><Drawing w={8} h={8}><path d="M1 1l6 6M7 1L1 7" stroke="#000" strokeWidth="1.800" /></Drawing></PanelButton>
        </PanelTitle>
        <Elements rows={mainElements} width={252} count={18} />
        <PanelFooter>
          <MoreButton aria-label="More">&gt;&gt;</MoreButton>
          <Elements rows={innerElements} width={196} count={14} />
        </PanelFooter>
      </FloatingPanel>
    </AppWindow>
  );
};

export default App;
